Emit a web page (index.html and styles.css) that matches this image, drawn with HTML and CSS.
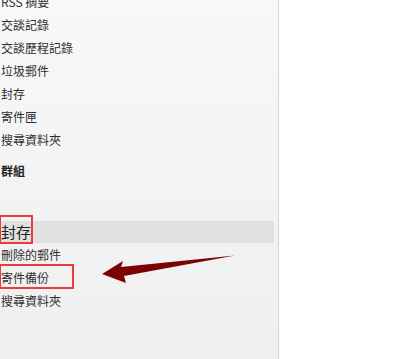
FILE: index.html
```html
<!DOCTYPE html>
<html lang="zh-Hant">
<head>
<meta charset="utf-8">
<title>Folders</title>
<link rel="stylesheet" href="styles.css">
</head>
<body>
<div class="app">
  <nav class="sidebar">
    <ul class="folder-list top-list">
      <li>RSS 摘要</li>
      <li>交談記錄</li>
      <li>交談歷程記錄</li>
      <li>垃圾郵件</li>
      <li>封存</li>
      <li>寄件匣</li>
      <li>搜尋資料夾</li>
    </ul>
    <div class="group-header">群組</div>
    <ul class="folder-list archive-list">
      <li class="archive-title">封存</li>
      <li>刪除的郵件</li>
      <li>寄件備份</li>
      <li>搜尋資料夾</li>
    </ul>
  </nav>
  <main class="content"></main>
  <svg class="annotations" width="393" height="359" viewBox="0 0 393 359">
    <rect x="0" y="216" width="32" height="27" fill="none" stroke="#ec3a3f" stroke-width="2"/>
    <rect x="0" y="265" width="73" height="23" fill="none" stroke="#ec3a3f" stroke-width="2"/>
    <polygon points="102,274 123,261 121,267 235,255.5 124,276 126,283" fill="#7b0303"/>
  </svg>
</div>
</body>
</html>
```
FILE: styles.css
```css
html, body {
  margin: 0;
  padding: 0;
  background: #ffffff;
}

.app {
  position: relative;
  display: flex;
  width: 393px;
  height: 359px;
  overflow: hidden;
  font-family: "Noto Sans CJK TC", "Noto Sans CJK SC", "Liberation Sans", sans-serif;
  color: #2e2e2e;
}

.sidebar {
  width: 279px;
  flex: none;
  border-right: 1px solid #d4d4d4;
  background: linear-gradient(to bottom, #f8f8f8 0%, #efefef 100%);
  padding-right: 4px;
  box-sizing: border-box;
}

.content {
  flex: 1;
  background: #ffffff;
}

.folder-list {
  list-style: none;
  margin: 0;
  padding: 0;
}

.folder-list li {
  height: 23px;
  line-height: 23px;
  font-size: 12px;
  padding-left: 1px;
  white-space: nowrap;
}

.top-list {
  margin-top: -10px;
}

.group-header {
  margin-top: 8px;
  height: 23px;
  line-height: 23px;
  font-size: 12px;
  font-weight: bold;
  padding-left: 1px;
  color: #222;
}

.archive-list {
  margin-top: 39px;
}

.archive-list li.archive-title {
  height: 22px;
  line-height: 22px;
  font-size: 15px;
  background: #e0e0e0;
  color: #222;
}

.annotations {
  position: absolute;
  left: 0;
  top: 0;
  pointer-events: none;
}
```
